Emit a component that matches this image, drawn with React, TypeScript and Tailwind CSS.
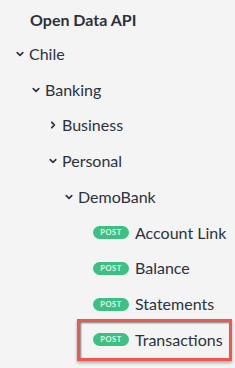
import { ReactNode } from 'react'

type Item = {
  label: string
  pad: string
  kind: 'open' | 'closed' | 'post'
  highlight?: boolean
}

const items: Item[] = [
  { label: 'Chile', pad: 'pl-[16px]', kind: 'open' },
  { label: 'Banking', pad: 'pl-[32px]', kind: 'open' },
  { label: 'Business', pad: 'pl-[49px]', kind: 'closed' },
  { label: 'Personal', pad: 'pl-[49px]', kind: 'open' },
  { label: 'DemoBank', pad: 'pl-[65px]', kind: 'open' },
  { label: 'Account Link', pad: 'pl-[93px]', kind: 'post' },
  { label: 'Balance', pad: 'pl-[93px]', kind: 'post' },
  { label: 'Statements', pad: 'pl-[93px]', kind: 'post' },
  { label: 'Transactions', pad: 'pl-[93px]', kind: 'post', highlight: true },
]

function Chevron({ open }: { open: boolean }) {
  return (
    <svg width="8" height="8" viewBox="0 0 8 8" className="mr-[5px] shrink-0 text-[#2b323c]">
      {open ? (
        <path d="M1.2 2.6 L4 5.4 L6.8 2.6" fill="none" stroke="currentColor" strokeWidth="1.6" strokeLinecap="round" strokeLinejoin="round" />
      ) : (
        <path d="M2.8 1.3 L5.4 4 L2.8 6.7" fill="none" stroke="currentColor" strokeWidth="1.8" strokeLinecap="round" strokeLinejoin="round" />
      )}
    </svg>
  )
}

function PostBadge() {
  return (
    <span className="mr-[6px] flex h-[13px] w-[36px] shrink-0 items-center justify-center rounded-full bg-[#3ec083] text-[7.5px] font-bold tracking-[0.5px] text-white/85">
      POST
    </span>
  )
}

function Row({ item }: { item: Item }): ReactNode {
  return (
    <div className={`relative flex h-[35.75px] items-center ${item.pad}`}>
      {item.kind === 'post' ? <PostBadge /> : <Chevron open={item.kind === 'open'} />}
      <span className="text-[16px] leading-none text-[#2b323c]">{item.label}</span>
      {item.highlight && (
        <span className="pointer-events-none absolute left-[77px] top-[-3px] h-[42px] w-[155px] border-[3px] border-[#ea5a50] shadow-[inset_1px_1px_2px_rgba(0,0,0,0.5),0_2px_3px_rgba(0,0,0,0.3)]" />
      )}
    </div>
  )
}

export default function App() {
  return (
    <div className="h-[368px] w-[235px] overflow-hidden bg-[#f4f4f4] font-['Lato','Liberation_Sans',sans-serif]">
      <div className="flex h-[36px] items-center pl-[30px] pt-[4px]">
        <span className="text-[16px] font-bold leading-none text-[#2b323c]">Open Data API</span>
      </div>
      {items.map((item) => (
        <Row key={item.label} item={item} />
      ))}
    </div>
  )
}
